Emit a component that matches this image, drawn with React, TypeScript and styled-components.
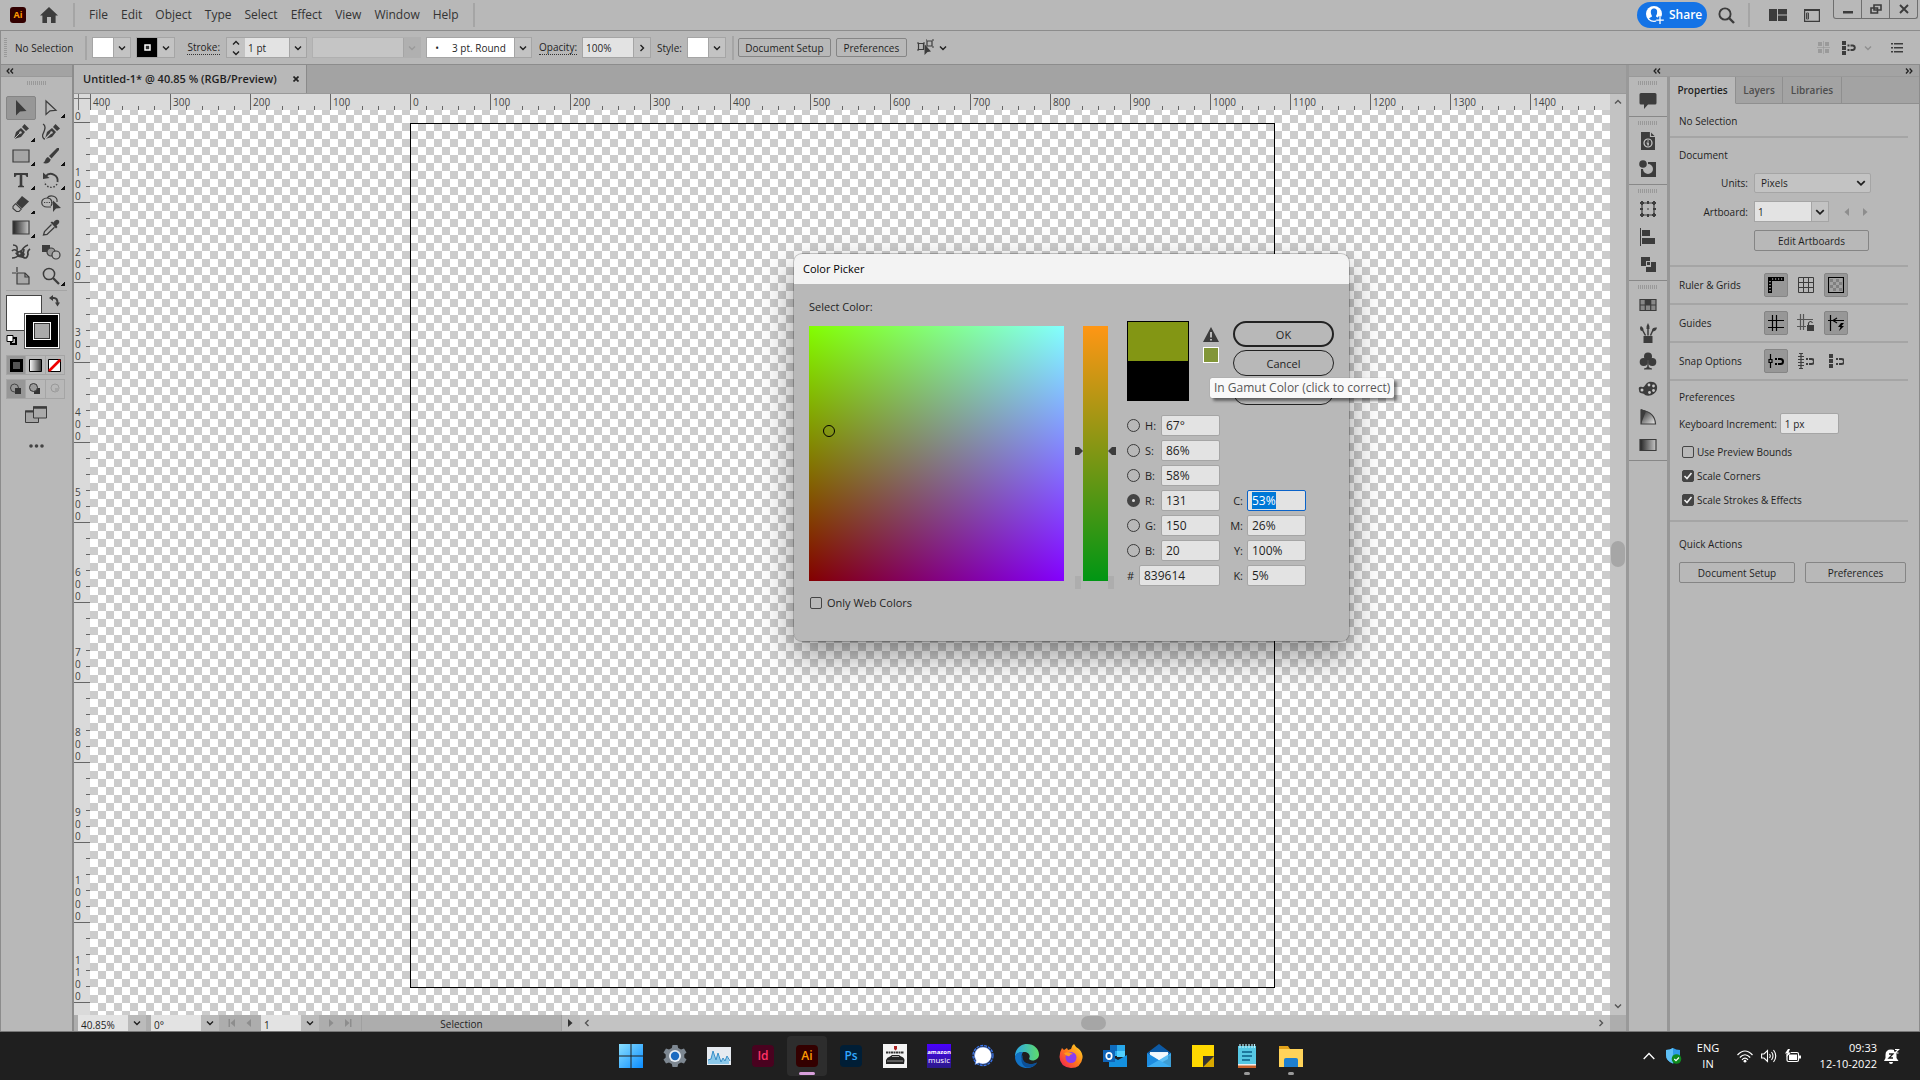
import React, { useEffect, useRef } from 'react';
import styled, { createGlobalStyle, css } from 'styled-components';

const ui = "'Open Sans', 'Noto Sans', sans-serif";
const c = {
  panel: '#b8b8b8',
  dark: '#a3a3a3',
  line: '#8c8c8c',
  soft: '#a5a5a5',
  field: '#e3e3e3',
  button: '#c3c3c3',
  ink: '#1f1f1f',
  icon: '#3c3c3c',
  ruler: '#dadada',
};

const Global = createGlobalStyle`
  *, *::before, *::after { box-sizing: border-box; }
  html, body, #root { height: 100%; }
  body { margin: 0; overflow: hidden; font: 10px/14px ${ui}; color: ${c.ink}; background: ${c.panel}; }
  button, input, select { font: inherit; color: inherit; margin: 0; border-radius: 0; }
  button { padding: 0; background: none; border: 0; white-space: nowrap; }
  svg { display: block; flex: none; }
  a { color: inherit; text-decoration: none; }
  ::selection { background: #0078d7; color: #fff; }
`;

/* ---------- shared pieces ---------- */

const Shell = styled.div`
  height: 100vh;
  display: grid;
  grid-template-rows: 31px 34px minmax(0, 1fr) 48px;
`;
const Row = styled.div<{ $gap?: number }>`
  display: flex;
  align-items: center;
  gap: ${p => p.$gap ?? 0}px;
`;
const Gap = styled.span<{ $w: number }>`
  width: ${p => p.$w}px;
`;
const Spacer = styled.div<{ $h: number }>`
  height: ${p => p.$h}px;
`;
const Divider = styled.span`
  width: 2px;
  height: 24px;
  background: ${c.soft};
`;
const Push = styled.span`
  flex: 1;
`;
const IconButton = styled.button`
  display: grid;
  place-items: center;
`;
const OutlineButton = styled.button<{ $w: number; $h?: number }>`
  width: ${p => p.$w}px;
  height: ${p => p.$h ?? 19}px;
  border: 1px solid #858585;
  border-radius: 2px;
`;
const Combo = styled.div<{ $off?: boolean }>`
  display: flex;
  height: 21px;
  border: 1px solid ${c.soft};
  background: ${c.button};
  ${p => p.$off && css`border-color: #b0b0b0; background: #b0b0b0;`}
`;
const ComboInput = styled.input<{ $w: number; $bg?: string; $center?: boolean }>`
  width: ${p => p.$w}px;
  min-width: 0;
  padding: 0 3px;
  border: 0;
  outline: 0;
  background: ${p => p.$bg ?? c.field};
  text-align: ${p => (p.$center ? 'center' : 'left')};
`;
const ComboDrop = styled.button`
  display: grid;
  place-items: center;
  width: 17px;
  border-left: 1px solid ${c.soft};
`;
const Chip = styled.span<{ $bg: string }>`
  display: grid;
  place-items: center;
  width: 20px;
  background: ${p => p.$bg};
`;

const Chevron = ({ dir = 'down', size = 8, color = c.ink }: { dir?: string; size?: number; color?: string }) => {
  const d: Record<string, string> = {
    down: 'M1 2.5 4 5.5 7 2.5',
    up: 'M1 5.5 4 2.5 7 5.5',
    right: 'M2.5 1 5.5 4 2.5 7',
    left: 'M5.5 1 2.5 4 5.5 7',
  };
  return (
    <svg width={size} height={size} viewBox="0 0 8 8" fill="none" stroke={color} strokeWidth="1.4">
      <path d={d[dir]} />
    </svg>
  );
};
const DoubleChevron = ({ right }: { right?: boolean }) => (
  <svg width="8" height="6" viewBox="0 0 8 6" fill="none" stroke="#222" strokeWidth="1.3">
    <path d={right ? 'M1 .5 3.3 3 1 5.5M4.6 .5 6.9 3 4.6 5.5' : 'M3.4 .5 1.1 3 3.4 5.5M7 .5 4.7 3 7 5.5'} />
  </svg>
);

type IcoProps = { children: React.ReactNode; s?: number; v?: number; stroke?: boolean; color?: string };
const Ico = ({ children, s = 18, v = 18, stroke, color = c.icon }: IcoProps) => (
  <svg width={s} height={s} viewBox={`0 0 ${v} ${v}`} fill={stroke ? 'none' : color} stroke={stroke ? color : 'none'} strokeWidth="1.2">
    {children}
  </svg>
);

/* ---------- menu bar ---------- */

const MenuBar = styled.header`
  display: flex;
  align-items: center;
  padding: 0 2px 0 10px;
  border-bottom: 1px solid ${c.line};
  background: ${c.panel};
`;
const AppBadge = styled.span`
  display: grid;
  place-items: center;
  width: 16px;
  height: 16px;
  margin-right: 14px;
  border-radius: 3px;
  background: #330000;
  color: #ff9a00;
  font-size: 9px;
  font-weight: 700;
`;
const Menus = styled.nav`
  display: flex;
  gap: 13px;
  padding: 0 14px;
  font-size: 12px;
  line-height: 16px;
  color: #333;
`;
const Share = styled.button`
  display: flex;
  align-items: center;
  gap: 4px;
  width: 70px;
  height: 26px;
  padding-left: 8px;
  border-radius: 13px;
  background: #1473e6;
  color: #fff;
  font-size: 12px;
  font-weight: 600;
`;
const HeaderTools = styled.div`
  display: flex;
  align-items: center;
  padding-left: 11px;
  padding-right: 13px;
`;
const WindowButtons = styled.div`
  display: flex;
  align-self: flex-start;
  height: 19px;
  border: 1px solid #6e6e6e;
  border-top: 0;
  border-radius: 0 0 3px 3px;
`;
const WindowButton = styled.button`
  display: grid;
  place-items: center;
  width: 27px;
  & + & { border-left: 1px solid #6e6e6e; width: 28px; }
`;

const Header = () => (
  <MenuBar>
    <AppBadge>Ai</AppBadge>
    <IconButton aria-label="Home">
      <svg width="18" height="16" viewBox="0 0 18 16" fill={c.icon}><path d="M9 0 18 8.6H15.6V16H11V10H7V16H2.4V8.6H0Z" /></svg>
    </IconButton>
    <Gap $w={15} /><Divider />
    <Menus>
      {['File', 'Edit', 'Object', 'Type', 'Select', 'Effect', 'View', 'Window', 'Help'].map(m => <a href="#" key={m}>{m}</a>)}
    </Menus>
    <Divider />
    <Push />
    <Share>
      <svg width="20" height="20" viewBox="0 0 20 20">
        <circle cx="9" cy="9" r="8" fill="#fff" />
        <path d="M9 3.500C12 3.500 12.500 6 12 8.500 11.700 10 11 10.500 11 11.500 12 12.500 13.500 12.500 14 13.500 11 16.500 7 16.500 4 13.500 4.500 12.500 6 12.500 7 11.500 7 10.500 6.300 10 6 8.500 5.500 6 6 3.500 9 3.500Z" fill="#1473e6" />
        <path d="M15 11.500V19M11.200 15.200H18.800" stroke="#1473e6" strokeWidth="4" />
        <path d="M15 11.500V19M11.200 15.200H18.800" stroke="#fff" strokeWidth="1.300" />
      </svg>
      Share
    </Share>
    <HeaderTools>
      <IconButton aria-label="Search">
        <svg width="17" height="17" viewBox="0 0 17 17" fill="none" stroke={c.icon}><circle cx="7" cy="7" r="5.600" strokeWidth="1.900" /><path d="M11 11 16 16" strokeWidth="2.400" /></svg>
      </IconButton>
      <Gap $w={13} /><Divider /><Gap $w={19} />
      <IconButton aria-label="Arrange documents">
        <svg width="18" height="12" viewBox="0 0 18 12" fill={c.icon}><path d="M0 0H8V12H0ZM9 0H18V5.500H9ZM9 6.500H18V12H9Z" /></svg>
      </IconButton>
      <Gap $w={17} />
      <IconButton aria-label="Workspace">
        <svg width="16" height="13" viewBox="0 0 16 13" fill="none" stroke={c.icon}><path d="M.6 .6H15.400V12.400H.6Z" strokeWidth="1.200" /><path d="M0 1H16" strokeWidth="2" /><path d="M2.500 4H4.500V10H2.500ZM2.500 6H4.500M2.500 8H4.500" strokeWidth=".9" /></svg>
      </IconButton>
    </HeaderTools>
    <WindowButtons>
      <WindowButton aria-label="Minimize"><svg width="10" height="10" viewBox="0 0 10 10"><path d="M0 7H10V9.500H0Z" fill={c.icon} /></svg></WindowButton>
      <WindowButton aria-label="Restore"><svg width="12" height="10" viewBox="0 0 12 10" fill="none" stroke={c.icon} strokeWidth="1.600"><path d="M4 1H11V6H4ZM1 4H7.500V9H1Z" /></svg></WindowButton>
      <WindowButton aria-label="Close"><svg width="10" height="10" viewBox="0 0 10 10" stroke={c.icon} strokeWidth="1.900"><path d="M1 1 9 9M9 1 1 9" /></svg></WindowButton>
    </WindowButtons>
  </MenuBar>
);

/* ---------- control bar ---------- */

const ControlBar = styled.div`
  display: flex;
  align-items: center;
  border-bottom: 1px solid ${c.line};
  border-left: 1px solid ${c.line};
  padding: 0 17px 0 3px;
`;
const SideGrip = styled.span`
  width: 3px;
  height: 20px;
  background: repeating-linear-gradient(#999 0 1px, transparent 1px 2px);
`;
const Dotted = styled.label`
  border-bottom: 1px dotted #333;
  line-height: 13px;
`;
const Stepper = styled.span`
  display: grid;
  align-content: center;
  justify-items: center;
  gap: 2px;
  width: 18px;
`;

const SnapIcon = () => (
  <svg width="15" height="14" viewBox="0 0 15 14" fill={c.icon}>
    <path d="M0 0H4V4H0ZM0 5H4V9H0ZM0 10H4V14H0ZM5.500 3.500H7.500V5.500H5.500ZM5.500 8H7.500V10H5.500Z" />
    <path d="M8.500 4.500H11A2.300 2.300 0 0 1 11 9H8.500" fill="none" stroke={c.icon} strokeWidth="2" />
  </svg>
);

const Controls = () => (
  <ControlBar>
    <SideGrip /><Gap $w={8} />No Selection
    <Gap $w={12} /><Divider /><Gap $w={5} />
    <Combo><Chip $bg="#fff" /><ComboDrop aria-label="Fill"><Chevron /></ComboDrop></Combo>
    <Gap $w={5} />
    <Combo>
      <Chip $bg="#000"><svg width="7" height="7" viewBox="0 0 7 7"><path d="M1 1H6V6H1Z" fill="#333" stroke="#fff" strokeWidth="1.500" /></svg></Chip>
      <ComboDrop aria-label="Stroke colour"><Chevron /></ComboDrop>
    </Combo>
    <Gap $w={12} /><Dotted htmlFor="sw">Stroke:</Dotted><Gap $w={6} />
    <Combo>
      <Stepper><Chevron dir="up" /><Chevron /></Stepper>
      <ComboInput id="sw" $w={44} defaultValue="1 pt" />
      <ComboDrop aria-label="Stroke weight"><Chevron /></ComboDrop>
    </Combo>
    <Gap $w={5} />
    <Combo $off><ComboInput aria-label="Width profile" disabled $w={90} $bg="#c5c5c5" /><ComboDrop disabled aria-label="Profiles"><Chevron color="#9a9a9a" /></ComboDrop></Combo>
    <Gap $w={5} />
    <Combo><ComboInput aria-label="Brush" $w={87} $bg="#fff" $center defaultValue={'•\u00a0\u00a0\u00a0\u00a0 3 pt. Round'} /><ComboDrop aria-label="Brushes"><Chevron /></ComboDrop></Combo>
    <Gap $w={7} /><Dotted htmlFor="op">Opacity:</Dotted><Gap $w={5} />
    <Combo><ComboInput id="op" $w={50} defaultValue="100%" /><ComboDrop aria-label="Opacity slider"><Chevron dir="right" /></ComboDrop></Combo>
    <Gap $w={6} />Style:<Gap $w={5} />
    <Combo><Chip $bg="#fff" /><ComboDrop aria-label="Style"><Chevron /></ComboDrop></Combo>
    <Gap $w={6} /><Divider /><Gap $w={4} />
    <OutlineButton $w={93}>Document Setup</OutlineButton>
    <Gap $w={5} />
    <OutlineButton $w={71}>Preferences</OutlineButton>
    <Gap $w={10} />
    <IconButton aria-label="Select similar">
      <svg width="17" height="17" viewBox="0 0 17 17" fill="none" stroke={c.icon}><path d="M1.500 4.500H6.500V10.500H1.500ZM10 2H15V7H10Z" strokeWidth="1.200" /><path d="M0 4H2M0 11H2M6 4H8M9 1H10M15 1H17M15 8H17" /><path d="M7.500 5V16L10.500 13 14 12.500Z" fill={c.icon} stroke="none" /></svg>
    </IconButton>
    <Gap $w={5} /><Chevron />
    <Push />
    <svg width="14" height="14" viewBox="0 0 14 14" fill="#9a9a9a"><path d="M1 1H5V5H1ZM8 1H12V5H8ZM1 8H5V12H1ZM8 8H12V12H8Z" /><path d="M6.500 0V13M0 6.500H13" stroke="#9a9a9a" strokeWidth=".7" /></svg>
    <Gap $w={11} /><SnapIcon />
    <Gap $w={7} /><Chevron color="#8f8f8f" /><Gap $w={19} />
    <svg width="12" height="10" viewBox="0 0 12 10" fill={c.icon}><path d="M0 0H2V1.500H0ZM3 0H12V1.500H3ZM0 4H2V5.500H0ZM3 4H12V5.500H3ZM0 8H2V9.500H0ZM3 8H12V9.500H3Z" /></svg>
  </ControlBar>
);

/* ---------- tool box ---------- */

const Workspace = styled.main`
  display: flex;
  min-height: 0;
  border-bottom: 1px solid #777;
`;
const ToolBox = styled.aside`
  width: 74px;
  flex: none;
  border: solid ${c.line};
  border-width: 0 2px 0 1px;
`;
const CollapseStrip = styled.div`
  display: flex;
  align-items: center;
  height: 12px;
  padding: 0 5px;
  background: ${c.dark};
  border-bottom: 1px solid #999;
`;
const Grip = styled.div`
  width: 20px;
  height: 4px;
  margin: 4px auto 2px;
  background: repeating-linear-gradient(90deg, #999 0 1px, transparent 1px 2px);
`;
const ToolGrid = styled.div`
  display: grid;
  grid-template-columns: repeat(2, 30px);
  grid-auto-rows: 24px;
  padding: 9px 5px 0;
`;
const Tool = styled.button<{ $on?: boolean; $more?: boolean }>`
  display: grid;
  place-items: center;
  border-radius: 2px;
  ${p => p.$on && css`background: #979797; border: 1px solid #858585;`}
  ${p => p.$more && css`background: linear-gradient(135deg, transparent 50%, #111 50%) right 1px bottom 2px / 4px 4px no-repeat;`}
`;
const Colors = styled.div`
  display: grid;
  grid-template-columns: 18px 18px 18px;
  grid-template-rows: 18px 18px 18px;
  margin: 2px 5px 6px;
  padding-top: 4px;
  border-top: 1px solid ${c.soft};
`;
const FillBox = styled.button`
  grid-area: 1 / 1 / 3 / 3;
  background: #fff;
  border: 1px solid #444;
`;
const StrokeBox = styled.button`
  grid-area: 2 / 2 / 4 / 4;
  display: grid;
  place-items: center;
  background: #000;
  border: 1px solid #555;
  box-shadow: inset 0 0 0 1px #fff;
  &::after { content: ''; width: 18px; height: 18px; background: #aaa; border: 1px solid #fff; outline: 1px solid #333; outline-offset: -2px; }
`;
const Corner = styled.span<{ $a: string; $start?: boolean }>`
  grid-area: ${p => p.$a};
  place-self: ${p => (p.$start ? 'start end' : 'center start')};
`;
const Modes = styled.div`
  display: flex;
  width: 59px;
  height: 20px;
  margin: 0 0 4px 5px;
  border: 1px solid ${c.soft};
`;
const Mode = styled.button<{ $on?: boolean }>`
  flex: 1;
  display: grid;
  place-items: center;
  background: ${p => (p.$on ? '#979797' : 'none')};
  & + & { border-left: 1px solid ${c.soft}; }
`;
const ToolFoot = styled.div`
  display: grid;
  justify-items: center;
  gap: 21px;
  padding-top: 3px;
`;

const k = c.icon;
const pen = <path d="M2 16 4 9 9 5 13 9 9 14ZM10 4 12.500 1 17 5.500 14 8Z" />;
const tools: { name: string; more?: boolean; icon: React.ReactNode }[] = [
  { name: 'Selection', icon: <Ico><path d="M4 1V16.500L8 12.500 14.500 12Z" /></Ico> },
  { name: 'Direct selection', more: true, icon: <Ico stroke><path d="M4 2V15.500L8 11.800 14 11.300Z" /></Ico> },
  { name: 'Pen', more: true, icon: <Ico>{pen}<path d="M2 16 8 10" stroke="#bbb" strokeWidth="1" /><circle cx="8.500" cy="9.500" r="1.200" fill="#bbb" /></Ico> },
  { name: 'Curvature', icon: <Ico><g transform="translate(1)">{pen}<path d="M2 16 8 10" stroke="#bbb" /><circle cx="8.500" cy="9.500" r="1.200" fill="#bbb" /></g><path d="M1 1C5 3 2 9 1 11S1 16 3 16" fill="none" stroke={k} strokeWidth="1.300" /></Ico> },
  { name: 'Rectangle', more: true, icon: <Ico><path d="M1 3H17V15H1Z" fill="#a5a5a5" stroke={k} strokeWidth="1.200" /></Ico> },
  { name: 'Paintbrush', more: true, icon: <Ico><path d="M17 1 15 1 7 9 9.500 11.500 17 3ZM6 10 8.700 12.600C8 16.500 4 17 1 16 3.500 15 3 11 6 10Z" /></Ico> },
  { name: 'Type', more: true, icon: <Ico><path d="M2 2H16V6H14.500Q14.500 4 12.500 4H10.300V14Q10.300 15 12 15V16.200H6V15Q7.700 15 7.700 14V4H5.500Q3.500 4 3.500 6H2Z" /></Ico> },
  { name: 'Rotate', more: true, icon: <Ico stroke><path d="M3.500 5.500A6.800 6.800 0 0 1 15.500 11" strokeWidth="1.900" /><path d="M15 13A6.800 6.800 0 0 1 2.500 11" strokeWidth="1.400" strokeDasharray="1.500 1.700" /><path d="M1 1.500V8L7.500 7Z" fill={k} stroke="none" /></Ico> },
  { name: 'Eraser', more: true, icon: <Ico><path d="M10 1 17 6.500 10 13.500 4 8Z" /><path d="M3.500 8.700 9.300 14 7 16.500H4.500L1 13.500V11.500Z" fill="none" stroke={k} strokeWidth="1.100" /></Ico> },
  { name: 'Shape builder', icon: <Ico s={20} v={20}><path d="M6 4C9 0 17 2 16 8M6 4C-1 4-1 13 6 13H10M6 4C11 4 12 9 10 12" fill="none" stroke={k} strokeWidth="1.200" /><path d="M3 8.500H12" stroke={k} strokeDasharray="1.200 1.200" /><path d="M12 6.500V18L15 14.500 20 14Z" /></Ico> },
  { name: 'Gradient', more: true, icon: <Ico><defs><linearGradient id="gr"><stop stopColor="#222" /><stop offset="1" stopColor="#c8c8c8" /></linearGradient></defs><path d="M1 2H17V15H1Z" fill="url(#gr)" stroke={k} strokeWidth="1.200" /></Ico> },
  { name: 'Eyedropper', icon: <Ico><path d="M10 5 8.500 3.500 10 2.500 11.500 3.500C13 1 15 0 17 1.500 18 3.500 16.500 5 14.500 6.500L15.500 8 14 9.500Z" /><path d="M9.500 5.500 2.500 12.500 1.500 16 5 15.500 12.500 8.300" fill="none" stroke={k} strokeWidth="1.300" /></Ico> },
  { name: 'Puppet warp', icon: <Ico s={20} v={20}><path d="M1 9Q3 6.500 6 9L12 15Q16 18 17 12 16 9 19 7" fill="none" stroke={k} strokeWidth="1.700" /><path d="M2 3Q7 3 6 8M1 16Q7 16 10 10 12 5 17 3M9 14Q13 12 13 7" fill="none" stroke={k} strokeWidth="1.500" /><path d="M4 11 10 8 14 12 12 16 7 15Z" /><circle cx="8.500" cy="11.500" r="1" fill="#b8b8b8" /></Ico> },
  { name: 'Blend', icon: <Ico s={19} v={19}><path d="M0 2H8V9H0Z" /><circle cx="9" cy="9" r="4" fill="#999" stroke={k} /><circle cx="14" cy="12" r="4" fill="#b8b8b8" stroke={k} strokeWidth="1.200" /></Ico> },
  { name: 'Artboard', icon: <Ico stroke><path d="M5 6H13L17 10V17H5Z" fill="#a8a8a8" /><path d="M0 6H4M5 0V5M13 6V10H17" /></Ico> },
  { name: 'Zoom', more: true, icon: <Ico stroke><circle cx="7" cy="7" r="5.600" strokeWidth="1.500" /><path d="M11 11 17 17" strokeWidth="2.300" /></Ico> },
];

const Tools = () => (
  <ToolBox>
    <CollapseStrip><DoubleChevron /></CollapseStrip>
    <Grip />
    <ToolGrid>
      {tools.map((t, i) => <Tool key={t.name} aria-label={t.name} $on={i === 0} $more={t.more}>{t.icon}</Tool>)}
    </ToolGrid>
    <Colors>
      <FillBox aria-label="Fill" />
      <StrokeBox aria-label="Stroke" />
      <Corner $a="1 / 3" $start><svg width="11" height="12" viewBox="0 0 11 12"><path d="M3 3H5Q8.500 3 8.500 8" fill="none" stroke={k} strokeWidth="2" /><path d="M0 3 4 0V6ZM6 7.500H11L8.500 11.500Z" fill={k} /></svg></Corner>
      <Corner $a="3 / 1"><svg width="12" height="12" viewBox="0 0 12 12"><path d="M5 4H10V10H5Z" fill="none" stroke="#000" strokeWidth="2" /><path d="M1 1.500H7V7.500H1Z" fill="#fff" stroke="#000" /></svg></Corner>
    </Colors>
    <Modes>
      <Mode $on aria-label="Color"><svg width="13" height="13" viewBox="0 0 13 13"><path d="M0 0H13V13H0Z" /><path d="M3 3H10V10H3Z" fill="#555" /></svg></Mode>
      <Mode aria-label="Gradient"><svg width="13" height="13" viewBox="0 0 13 13"><defs><linearGradient id="g2"><stop stopColor="#fff" /><stop offset="1" stopColor="#333" /></linearGradient></defs><path d="M.5 .5H12.500V12.500H.5Z" fill="url(#g2)" stroke="#000" /></svg></Mode>
      <Mode aria-label="None"><svg width="13" height="13" viewBox="0 0 13 13"><path d="M.5 .5H12.500V12.500H.5Z" fill="#fff" stroke="#000" /><path d="M1 12 12 1" stroke="#e00" strokeWidth="2.600" /></svg></Mode>
    </Modes>
    <Modes>
      <Mode $on aria-label="Draw normal"><svg width="12" height="12" viewBox="0 0 12 12"><circle cx="4.500" cy="5" r="4" fill="none" stroke="#444" /><path d="M5 5H11V11H5Z" fill="#333" /></svg></Mode>
      <Mode aria-label="Draw behind"><svg width="12" height="12" viewBox="0 0 12 12"><path d="M5 5H11V11H5Z" fill="#333" /><circle cx="4.500" cy="4.500" r="4" fill="#999" stroke="#333" /></svg></Mode>
      <Mode aria-label="Draw inside"><svg width="12" height="12" viewBox="0 0 12 12"><circle cx="6" cy="5" r="4" fill="none" stroke="#999" /><path d="M6 5H10Q10 9 6 9Z" fill="#a5a5a5" /></svg></Mode>
    </Modes>
    <ToolFoot>
      <svg width="23" height="17" viewBox="0 0 23 17" stroke={k}><path d="M.5 5H13.500V16.500H.5Z" fill="#a5a5a5" /><path d="M0 5.500H13" strokeWidth="2" /><path d="M8.500 1H21.500V12H8.500Z" fill="#aaa" /><path d="M8 1.500H22" strokeWidth="2.500" /></svg>
      <svg width="15" height="4" viewBox="0 0 15 4" fill="#444"><circle cx="2" cy="2" r="1.800" /><circle cx="7.500" cy="2" r="1.800" /><circle cx="13" cy="2" r="1.800" /></svg>
    </ToolFoot>
  </ToolBox>
);

/* ---------- document ---------- */

const Doc = styled.section`
  flex: 1;
  min-width: 0;
  display: grid;
  grid-template-rows: 29px minmax(0, 1fr) 16px;
`;
const TabBar = styled.div`
  display: flex;
  background: ${c.dark};
  border-bottom: 1px solid #999;
`;
const DocTab = styled.button`
  display: flex;
  align-items: center;
  gap: 16px;
  padding: 0 7px 0 9px;
  border-right: 1px solid #8a8a8a;
  background: ${c.panel};
  font-size: 11px;
  font-weight: 600;
`;
const Board = styled.div`
  display: grid;
  grid-template-columns: 16px minmax(0, 1fr) 16px;
  grid-template-rows: 16px minmax(0, 1fr);
`;
const RulerCorner = styled.div`
  background:
    linear-gradient(#777, #777) 4px 0 / 1px 100% no-repeat,
    linear-gradient(#777, #777) 0 4px / 100% 1px no-repeat,
    ${c.ruler};
`;
const RulerX = styled.div`
  display: flex;
  overflow: hidden;
  color: #444;
  background: ${c.ruler};
`;
const MarkX = styled.span`
  flex: none;
  width: 80px;
  padding: 1px 0 0 2px;
  border-left: 1px solid #666;
  background: repeating-linear-gradient(90deg, transparent 0 15px, #666 15px 16px) left bottom / 100% 4px no-repeat;
`;
const RulerY = styled.div`
  display: flex;
  flex-direction: column;
  overflow: hidden;
  color: #444;
  background: ${c.ruler};
  line-height: 12px;
`;
const MarkY = styled.span<{ $first?: boolean }>`
  flex: none;
  display: flex;
  flex-direction: column;
  justify-content: flex-end;
  height: ${p => (p.$first ? 13 : 80)}px;
  padding-left: 1px;
  border-bottom: 1px solid #666;
  background: ${p => (p.$first ? 'none' : 'repeating-linear-gradient(transparent 0 15px, #666 15px 16px) right top / 4px 100% no-repeat')};
`;
const Canvas = styled.div`
  position: relative;
  overflow: hidden;
  background: conic-gradient(#ccc 25%, #fff 0 50%, #ccc 0 75%, #fff 0) 0 13px / 16px 16px;
`;
const Artboard = styled.div`
  position: absolute;
  left: 320px;
  top: 13px;
  width: 865px;
  height: 865px;
  border: 1px solid #000;
`;
const ScrollY = styled.div`
  grid-row: 1 / 3;
  grid-column: 3;
  display: flex;
  flex-direction: column;
  align-items: center;
  padding: 4px 0 5px;
  background: #c3c3c3;
`;
const Thumb = styled.button<{ $w: number; $h: number }>`
  width: ${p => p.$w}px;
  height: ${p => p.$h}px;
  border-radius: 7px;
  background: #a6a6a6;
`;
const Status = styled.footer`
  display: flex;
  align-items: stretch;
  padding-left: 4px;
  background: #adadad;
`;
const StatusField = styled.input<{ $w: number }>`
  width: ${p => p.$w}px;
  padding: 3px 3px 0;
  border: 0;
  background: ${c.field};
`;
const StatusDrop = styled.button<{ $m: number }>`
  display: grid;
  place-items: center;
  width: 18px;
  margin-right: ${p => p.$m}px;
  background: #bbb;
`;
const Nav = styled.div`
  display: flex;
  align-items: center;
  justify-content: space-evenly;
  width: 42px;
`;
const StatusText = styled.span`
  flex: none;
  width: 201px;
  border: solid #a0a0a0;
  border-width: 0 1px;
  text-align: center;
  line-height: 18px;
`;
const ScrollX = styled.div`
  flex: 1;
  display: flex;
  align-items: center;
  padding: 0 5px 0 3px;
  background: #c3c3c3;
`;
const Grow = styled.span<{ $n: number }>`
  flex: ${p => p.$n};
`;
const Tri = ({ flip, bar, color = '#8d8d8d' }: { flip?: boolean; bar?: boolean; color?: string }) => (
  <svg width="8" height="8" viewBox="0 0 8 8" fill={color}>
    <g transform={flip ? 'matrix(-1 0 0 1 8 0)' : undefined}><path d="M1 0 5.500 4 1 8Z" />{bar && <path d="M6 0H7.500V8H6Z" />}</g>
  </svg>
);

const xs = Array.from({ length: 19 }, (_, i) => Math.abs(i - 4) * 100);
const ys = Array.from({ length: 12 }, (_, i) => String(i * 100));

const Document = () => (
  <Doc>
    <TabBar>
      <DocTab>Untitled-1* @ 40.85 % (RGB/Preview)
        <svg width="6" height="6" viewBox="0 0 6 6" stroke="#222" strokeWidth="1.700"><path d="M.5 .5 5.500 5.500M5.500 .5 .5 5.500" /></svg>
      </DocTab>
    </TabBar>
    <Board>
      <RulerCorner />
      <RulerX>{xs.map((x, i) => <MarkX key={i}>{x}</MarkX>)}</RulerX>
      <ScrollY>
        <Chevron dir="up" color="#555" /><Grow $n={435} /><Thumb $w={14} $h={26} aria-label="Scroll vertically" /><Grow $n={436} /><Chevron color="#555" />
      </ScrollY>
      <RulerY>
        {ys.map((y, i) => <MarkY key={y} $first={i === 0}>{y.split('').map((d, j) => <span key={j}>{d}</span>)}</MarkY>)}
      </RulerY>
      <Canvas><Artboard /></Canvas>
    </Board>
    <Status>
      <StatusField aria-label="Zoom" $w={50} defaultValue="40.85%" /><StatusDrop $m={5} aria-label="Zoom levels"><Chevron /></StatusDrop>
      <StatusField aria-label="Rotation" $w={50} defaultValue="0°" /><StatusDrop $m={0} aria-label="Rotations"><Chevron /></StatusDrop>
      <Nav><Tri flip bar /><Tri flip /></Nav>
      <StatusField aria-label="Artboard number" $w={40} defaultValue="1" /><StatusDrop $m={0} aria-label="Artboards"><Chevron /></StatusDrop>
      <Nav><Tri /><Tri bar /></Nav>
      <StatusText>Selection</StatusText>
      <StatusDrop $m={0} aria-label="Status menu"><Tri color="#333" /></StatusDrop>
      <ScrollX>
        <Chevron dir="left" color="#555" /><Grow $n={492} /><Thumb $w={25} $h={14} aria-label="Scroll horizontally" /><Grow $n={494} /><Chevron dir="right" color="#555" />
      </ScrollX>
      <Gap $w={16} />
    </Status>
  </Doc>
);

/* ---------- dock and properties ---------- */

const Right = styled.aside`
  flex: none;
  width: 294px;
  display: grid;
  grid-template-columns: 41px 1fr;
  grid-template-rows: 12px 1fr;
  border-left: 3px solid #999;
  border-right: 1px solid ${c.line};
`;
const Strip = styled.div`
  display: flex;
  align-items: center;
  justify-content: space-between;
  grid-column: 1 / 3;
  padding: 0 6px 0 24px;
  background: ${c.dark};
  border-bottom: 1px solid #999;
`;
const Dock = styled.div`
  border-right: 3px solid #979797;
`;
const DockGroup = styled.div`
  display: flex;
  flex-direction: column;
  padding-bottom: 1px;
  border-bottom: 1px solid #888;
`;
const DockIcon = styled.button`
  height: 28px;
  display: grid;
  place-items: center;
`;
const Props = styled.div`
  display: flex;
  flex-direction: column;
`;
const PropTabs = styled.div`
  display: flex;
  height: 27px;
  background: ${c.dark};
  font-weight: 600;
  color: #4d4d4d;
`;
const PropTab = styled.button<{ $on?: boolean; $w: number }>`
  width: ${p => p.$w}px;
  border: solid #8f8f8f;
  border-width: 0 1px 1px 0;
  ${p => p.$on && css`background: ${c.panel}; border-bottom-color: ${c.panel}; color: ${c.ink};`}
`;
const TabFill = styled.span`
  flex: 1;
  border-bottom: 1px solid #8f8f8f;
`;
const Section = styled.section<{ $h: number }>`
  height: ${p => p.$h}px;
  margin-right: 11px;
  padding-left: 9px;
  border-bottom: 2px solid ${c.soft};
`;
const Title = styled.h2<{ $top: number; $bottom: number }>`
  margin: 0;
  padding: ${p => p.$top}px 0 ${p => p.$bottom}px;
  font: inherit;
`;
const FormRow = styled.div`
  display: grid;
  grid-template-columns: 69px auto 1fr;
  column-gap: 6px;
  align-items: center;
  height: 29px;
  & > :first-child { text-align: right; }
`;
const SelectBox = styled.div`
  display: grid;
  align-items: center;
  width: 117px;
  & > * { grid-area: 1 / 1; }
  & > svg { justify-self: end; margin-right: 5px; pointer-events: none; }
`;
const Select = styled.select`
  appearance: none;
  height: 20px;
  padding: 0 6px;
  border: 1px solid ${c.soft};
  border-radius: 2px;
  background: ${c.button};
`;
const Steps = styled.div`
  display: flex;
  gap: 12px;
  padding-left: 7px;
`;
const ToggleRow = styled.section`
  display: grid;
  grid-template-columns: 79px repeat(3, 24px);
  column-gap: 6px;
  align-items: center;
  height: 38px;
  margin-right: 11px;
  padding-left: 9px;
  border-bottom: 2px solid ${c.soft};
`;
const Toggle = styled.button<{ $on?: boolean }>`
  display: grid;
  place-items: center;
  width: 24px;
  height: 24px;
  border-radius: 2px;
  ${p => p.$on && css`background: #979797; border: 1px solid #858585;`}
`;
const TextField = styled.input<{ $w: number }>`
  width: ${p => p.$w}px;
  height: 21px;
  padding: 0 4px;
  border: 1px solid ${c.soft};
  border-radius: 2px;
  background: ${c.field};
`;
const Check = styled.label`
  display: flex;
  align-items: center;
  gap: 3px;
  height: 24px;
  padding-left: 3px;
`;
const tick = "url(\"data:image/svg+xml,%3Csvg xmlns='http://www.w3.org/2000/svg' viewBox='0 0 10 10'%3E%3Cpath d='M1.500 5 4 7.500 8.500 2' fill='none' stroke='%23eee' stroke-width='1.600'/%3E%3C/svg%3E\")";
const Box = styled.input`
  appearance: none;
  width: 12px;
  height: 12px;
  border: 1px solid #444;
  border-radius: 2px;
  &:checked { background: #444 ${tick} center / 10px 10px no-repeat; }
`;
const QuickActions = styled.section`
  padding-left: 9px;
`;

const dock: { name: string; icon: React.ReactNode }[][] = [
  [{ name: 'Comments', icon: <Ico><path d="M2 1H16Q17.500 1 17.500 2.500V11Q17.500 12.500 16 12.500H9L5 17V12.500H2Q.5 12.500 .5 11V2.500Q.5 1 2 1Z" /></Ico> }],
  [
    { name: 'Document info', icon: <Ico><path d="M2 0H11.500L16 4.500V18H2Z" /><path d="M11.500 0V4.500H16" fill="none" stroke="#b8b8b8" /><circle cx="9" cy="11" r="4" fill="none" stroke="#ccc" strokeWidth="1.200" /><path d="M8.300 8.500H9.800V9.500H8.300ZM7.500 10.500H9.800V13.500H8.300V11.500H7.500Z" fill="#ccc" /></Ico> },
    { name: 'CC Libraries', icon: <Ico><circle cx="4" cy="4" r="3.800" /><path d="M9 2H17V17H2V9H4A5 5 0 1 0 9 4Z" /></Ico> },
  ],
  [
    { name: 'Transform', icon: <Ico stroke><path d="M3 3H15V15H3Z" /><path d="M1 3H5M3 1V5M13 3H17M15 1V5M1 15H5M3 13V17M13 15H17M15 13V17M9 1V4M9 14V17M1 9H4M14 9H17" strokeWidth="2" /><path d="M8 9H10" /></Ico> },
    { name: 'Align', icon: <Ico><path d="M1 0H2V18H1ZM3 2H11V8H3ZM3 10H16V16H3Z" /></Ico> },
    { name: 'Pathfinder', icon: <Ico><path d="M2 1H11V5H7V10H2Z" /><path d="M8 6H11V9H8Z" /><path d="M12 6H17V16H7V11H12Z" /></Ico> },
  ],
  [
    { name: 'Swatches', icon: <Ico><path d="M1 3.500H17V14.500H1Z" fill="#888" stroke={k} strokeWidth="1.200" /><path d="M6 3H12V9H6Z" /><path d="M1 9H17M6.300 3V15M11.700 3V15" stroke={k} /></Ico> },
    { name: 'Brushes', icon: <Ico s={20} v={20}><path d="M5.500 13H14.500V20H5.500Z" /><path d="M7.500 12.500 4.500 7M10 12.500V6M12.500 12.500 15 7" stroke={k} strokeWidth="1.500" /><path d="M8.500 6Q8 3 10 0 12 3 11.500 6ZM3 8Q1 5 3 3 6 5 5.500 7ZM14 7.500Q14 4 19 4.500 18.500 8 15 8.500Z" /></Ico> },
    { name: 'Symbols', icon: <Ico><circle cx="9" cy="4.500" r="4" /><circle cx="4.700" cy="10" r="4" /><circle cx="13.300" cy="10" r="4" /><path d="M8.300 7H9.700V14.500Q10 16 13 16.500V17.500H5V16.500Q8 16 8.300 14.500Z" /></Ico> },
    { name: 'Color', icon: <Ico s={20} v={20}><path d="M11 3C17 2 20 6 19 10 18 15 12 18 7 16 6 13 1 16 1 11 0 8 2 7 4 8 7 9 7 4 11 3Z" /><g fill="#c8c8c8"><circle cx="11" cy="6" r="1.400" /><circle cx="15.500" cy="7" r="1.400" /><circle cx="15.500" cy="11.500" r="1.400" /><circle cx="11.500" cy="13.500" r="1.400" /><circle cx="4" cy="11" r="1.500" /></g></Ico> },
    { name: 'Color guide', icon: <Ico><defs><linearGradient id="gg" x2="1" y2="1"><stop stopColor="#222" /><stop offset="1" stopColor="#eee" /></linearGradient></defs><path d="M2 16V2Q16 4 16.500 16Z" fill="url(#gg)" stroke={k} strokeWidth="1.200" /><path d="M2 16V1L7 3Z" /></Ico> },
    { name: 'Gradient', icon: <Ico><path d="M1 3.500H17V14.500H1Z" fill="url(#gr)" stroke={k} strokeWidth="1.200" /></Ico> },
  ],
];

const Magnet = ({ x = 7, color = k }: { x?: number; color?: string }) => (
  <g transform={`translate(${x} 5)`}><path d="M0 0H2V2H0ZM0 5H2V7H0Z" fill={color} /><path d="M3 1H5.500A2.400 2.400 0 0 1 5.500 6H3" fill="none" stroke={color} strokeWidth="2" /></g>
);

const Properties = () => (
  <Right>
    <Strip><DoubleChevron /><DoubleChevron right /></Strip>
    <Dock>
      {dock.map((g, i) => (
        <DockGroup key={i}>
          <Grip />
          {g.map(d => <DockIcon key={d.name} aria-label={d.name}>{d.icon}</DockIcon>)}
        </DockGroup>
      ))}
    </Dock>
    <Props>
      <PropTabs>
        <PropTab $on $w={66}>Properties</PropTab><PropTab $w={47}>Layers</PropTab><PropTab $w={59}>Libraries</PropTab><TabFill />
      </PropTabs>
      <Section $h={34}><Title $top={10} $bottom={8}>No Selection</Title></Section>
      <Section $h={129}>
        <Title $top={10} $bottom={6}>Document</Title>
        <FormRow>
          <label htmlFor="units">Units:</label>
          <SelectBox><Select id="units"><option>Pixels</option></Select><Chevron size={10} /></SelectBox>
        </FormRow>
        <FormRow>
          <label htmlFor="ab">Artboard:</label>
          <Combo><ComboInput id="ab" $w={56} defaultValue="1" /><ComboDrop aria-label="Artboards"><Chevron size={10} /></ComboDrop></Combo>
          <Steps><Tri flip /><Tri /></Steps>
        </FormRow>
        <FormRow><span /><OutlineButton $w={115} $h={21}>Edit Artboards</OutlineButton></FormRow>
      </Section>
      <ToggleRow>
        <span>Ruler &amp; Grids</span>
        <Toggle $on aria-label="Show rulers"><Ico s={16} v={16}><path d="M0 0H16V4H4V16H0Z" fill="#000" /><path d="M4 2H15M2 4V15" stroke="#ddd" strokeDasharray="1.200 1.800" /></Ico></Toggle>
        <Toggle aria-label="Show grid"><Ico s={16} v={16} stroke><path d="M.5 .5H15.500V15.500H.5ZM5.500 0V16M10.500 0V16M0 5.500H16M0 10.500H16" strokeWidth="1" /></Ico></Toggle>
        <Toggle $on aria-label="Show transparency grid"><Ico s={16} v={16}><path d="M.5 .5H15.500V15.500H.5Z" fill="#a3a3a3" stroke="#000" /><path d="M2 2H5V5H2ZM8 2H11V5H8ZM5 5H8V8H5ZM11 5H14V8H11ZM2 8H5V11H2ZM8 8H11V11H8ZM5 11H8V14H5ZM11 11H14V14H11Z" fill="#808080" /></Ico></Toggle>
      </ToggleRow>
      <ToggleRow>
        <span>Guides</span>
        <Toggle $on aria-label="Show guides"><Ico s={16} v={16}><path d="M4.500 0V16M8.500 0V16M0 5.500H16M0 12.500H16" stroke="#000" /></Ico></Toggle>
        <Toggle aria-label="Lock guides"><Ico s={18} v={18}><path d="M3.500 0V16M6.500 0V16M0 5.500H16M0 12.500H9" stroke="#555" /><path d="M10 11H17V17H10Z" /><path d="M11.500 11V9Q13.500 6 15.500 9" fill="none" stroke={k} /></Ico></Toggle>
        <Toggle $on aria-label="Smart guides"><Ico s={16} v={16}><path d="M2.500 0V16M0 5.500H16M9 3 5 5.500 9 8" stroke="#000" fill="none" /><path d="M13 8 10 12H12.500L11 16 16 11H13.500L16 8Z" fill="#000" /></Ico></Toggle>
      </ToggleRow>
      <ToggleRow>
        <span>Snap Options</span>
        <Toggle $on aria-label="Snap to point"><Ico s={16} v={16}><path d="M2.500 1V6M2.500 10V15M1 6.500H4V9.500H1Z" stroke="#000" fill="none" /><Magnet x={7} color="#000" /></Ico></Toggle>
        <Toggle aria-label="Snap to grid"><Ico s={16} v={16}><path d="M1 .5H5M1 15.500H5M3 0V16M0 3.500H6M0 6.500H6M0 9.500H6M0 12.500H6" stroke={k} /><Magnet x={8} /></Ico></Toggle>
        <Toggle aria-label="Snap to pixel"><Ico s={16} v={16}><path d="M1 1H5V5H1ZM1 6H5V10H1ZM1 11H5V15H1Z" /><Magnet x={8} /></Ico></Toggle>
      </ToggleRow>
      <Section $h={141}>
        <Title $top={9} $bottom={9}>Preferences</Title>
        <Row $gap={3}><label htmlFor="ki">Keyboard Increment:</label><TextField id="ki" $w={59} defaultValue="1 px" /></Row>
        <Spacer $h={6} />
        <Check><Box type="checkbox" />Use Preview Bounds</Check>
        <Check><Box type="checkbox" defaultChecked />Scale Corners</Check>
        <Check><Box type="checkbox" defaultChecked />Scale Strokes &amp; Effects</Check>
      </Section>
      <QuickActions>
        <Title $top={15} $bottom={11}>Quick Actions</Title>
        <Row $gap={10}><OutlineButton $w={116} $h={21}>Document Setup</OutlineButton><OutlineButton $w={101} $h={21}>Preferences</OutlineButton></Row>
      </QuickActions>
    </Props>
  </Right>
);

/* ---------- colour picker ---------- */

const Dialog = styled.div`
  position: absolute;
  left: 794px;
  top: 254px;
  width: 555px;
  height: 387px;
  border-radius: 8px;
  background: ${c.panel};
  box-shadow: 0 0 0 1px rgba(0, 0, 0, .2), 0 14px 34px rgba(0, 0, 0, .42);
  font-size: 11px;
  line-height: 16px;
`;
const DialogTitle = styled.h1`
  height: 30px;
  margin: 0;
  padding: 7px 9px;
  border-radius: 8px 8px 0 0;
  background: #f3f3f3;
  color: #000;
  font: inherit;
`;
const DialogBody = styled.div`
  display: flex;
  padding-left: 15px;
`;
const FieldColumn = styled.div`
  width: 255px;
`;
const FieldLabel = styled.div`
  height: 42px;
  padding-top: 15px;
`;
const ColorField = styled.div`
  position: relative;
  height: 255px;
  background: linear-gradient(#0f0, #000), linear-gradient(90deg, #000, #00f), #830000;
  background-blend-mode: screen;
  &::after {
    content: '';
    position: absolute;
    left: 14px;
    top: 99px;
    width: 12px;
    height: 12px;
    border: 1px solid #000;
    border-radius: 50%;
  }
`;
const HueColumn = styled.div`
  display: flex;
  padding: 42px 11px 0 11px;
`;
const HueStrip = styled.div`
  width: 25px;
  height: 255px;
  background: linear-gradient(#ff9614, #009614);
`;
const Handle = styled.div<{ $right?: boolean }>`
  display: flex;
  flex-direction: column;
  justify-content: space-between;
  align-items: ${p => (p.$right ? 'flex-start' : 'flex-end')};
  width: 8px;
  height: 263px;
  padding-top: 121px;
  &::after { content: ''; width: 6px; height: 13px; background: #adadad; align-self: flex-start; }
`;
const Values = styled.div`
  padding-top: 37px;
`;
const Head = styled.div`
  display: grid;
  grid-template-columns: 62px 16px 101px;
  column-gap: 14px;
  align-items: start;
  margin-bottom: 10px;
`;
const Preview = styled.div`
  height: 80px;
  border: 1px solid #000;
  background: linear-gradient(#839614 0 39px, #000 39px);
`;
const Warn = styled.div`
  display: grid;
  gap: 5px;
  padding-top: 6px;
`;
const GamutSwatch = styled.button`
  width: 16px;
  height: 16px;
  border: 1px solid #fff;
  background: #829638;
`;
const Buttons = styled.div`
  display: grid;
  gap: 3px;
`;
const Pill = styled.button<{ $main?: boolean }>`
  height: 26px;
  padding-top: 1px;
  border: ${p => (p.$main ? 2 : 1)}px solid #222;
  border-radius: 13px;
`;
const ValueGrid = styled.div`
  display: grid;
  grid-template-columns: 18px 16px 59px 27px 59px;
  grid-auto-rows: 21px;
  row-gap: 4px;
  align-items: center;
`;
const Radio = styled.input`
  appearance: none;
  width: 13px;
  height: 13px;
  border: 1px solid #3a3a3a;
  border-radius: 50%;
  &:checked { border: 5px solid #444; background: #ddd; }
`;
const ValueInput = styled.input<{ $hot?: boolean; $wide?: boolean }>`
  width: 100%;
  height: 21px;
  padding: 0 4px;
  border: 1px solid ${p => (p.$hot ? '#0a63c9' : c.soft)};
  border-radius: 2px;
  outline: 0;
  background: ${c.field};
  font-size: 12px;
  ${p => p.$wide && css`grid-column: 2 / 4; justify-self: end; width: 81px;`}
`;
const RightLabel = styled.label`
  grid-column: 4;
  padding-right: 4px;
  text-align: right;
`;
const WebOnly = styled.label`
  display: flex;
  align-items: center;
  gap: 5px;
  padding: 14px 0 0 1px;
`;
const Tooltip = styled.div`
  position: absolute;
  left: 416px;
  top: 124px;
  height: 20px;
  padding: 2px 4px;
  border-radius: 2px;
  background: #f9f9f9;
  color: #575757;
  font-size: 12px;
  white-space: nowrap;
  box-shadow: 3px 3px 3px rgba(0, 0, 0, .45), 0 0 1px rgba(0, 0, 0, .4);
`;

const left = [['H', '67°'], ['S', '86%'], ['B', '58%'], ['R', '131'], ['G', '150'], ['B', '20']];
const right: Record<number, string[]> = { 3: ['C', '53%'], 4: ['M', '26%'], 5: ['Y', '100%'] };

const Picker = () => {
  const cyan = useRef<HTMLInputElement>(null);
  useEffect(() => {
    cyan.current?.focus();
    cyan.current?.select();
  }, []);
  return (
    <Dialog role="dialog" aria-label="Color Picker">
      <DialogTitle>Color Picker</DialogTitle>
      <DialogBody>
        <FieldColumn>
          <FieldLabel>Select Color:</FieldLabel>
          <ColorField />
          <WebOnly><Box type="checkbox" />Only Web Colors</WebOnly>
        </FieldColumn>
        <HueColumn>
          <Handle><svg width="8" height="8" viewBox="0 0 8 8"><path d="M0 0H4L8 4 4 8H0Z" fill={k} /></svg></Handle>
          <HueStrip />
          <Handle $right><svg width="8" height="8" viewBox="0 0 8 8"><path d="M8 0H4L0 4 4 8H8Z" fill={k} /></svg></Handle>
        </HueColumn>
        <Values>
          <Head>
            <Preview />
            <Warn>
              <svg width="16" height="15" viewBox="0 0 16 15"><path d="M8 0 16 15H0Z" fill={k} /><path d="M7.300 5H8.700V10.500H7.300ZM7.300 12H8.700V13.500H7.300Z" fill="#eee" /></svg>
              <GamutSwatch aria-label="In gamut color" />
            </Warn>
            <Buttons><Pill $main>OK</Pill><Pill>Cancel</Pill><Pill aria-label="Color Swatches" /></Buttons>
          </Head>
          <ValueGrid>
            {left.map(([n, v], i) => (
              <React.Fragment key={i}>
                <Radio type="radio" name="channel" id={`r${i}`} defaultChecked={i === 3} />
                <label htmlFor={`r${i}`}>{n}:</label>
                <ValueInput aria-label={n} defaultValue={v} />
                {right[i] ? (
                  <>
                    <RightLabel htmlFor={`v${i}`}>{right[i][0]}:</RightLabel>
                    <ValueInput id={`v${i}`} ref={i === 3 ? cyan : undefined} $hot={i === 3} defaultValue={right[i][1]} />
                  </>
                ) : <><span /><span /></>}
              </React.Fragment>
            ))}
            <label htmlFor="hex">#</label>
            <ValueInput id="hex" $wide defaultValue="839614" />
            <RightLabel htmlFor="kk">K:</RightLabel>
            <ValueInput id="kk" defaultValue="5%" />
          </ValueGrid>
        </Values>
      </DialogBody>
      <Tooltip role="tooltip">In Gamut Color (click to correct)</Tooltip>
    </Dialog>
  );
};

/* ---------- task bar ---------- */

const TaskBar = styled.nav`
  display: grid;
  grid-template-columns: 1fr auto 1fr;
  align-items: center;
  padding-left: 2px;
  background: #1f1f1f;
  color: #fff;
`;
const Pins = styled.div`
  grid-column: 2;
  display: flex;
`;
const Pin = styled.button<{ $on?: boolean; $dot?: boolean }>`
  position: relative;
  display: grid;
  place-items: center;
  width: 40px;
  height: 40px;
  margin: 0 2px;
  border-radius: 4px;
  ${p => p.$on && css`background: #2d2d2d;`}
  &::after {
    content: '';
    position: absolute;
    bottom: 1px;
    width: ${p => (p.$on ? 16 : 6)}px;
    height: 3px;
    border-radius: 2px;
    background: ${p => (p.$on ? '#d8a0dc' : p.$dot ? '#9a9a9a' : 'transparent')};
  }
`;
const Tile = styled.span<{ $bg: string; $fg: string }>`
  display: grid;
  place-items: center;
  width: 22px;
  height: 22px;
  border-radius: 4px;
  background: ${p => p.$bg};
  color: ${p => p.$fg};
  font-size: 12px;
  font-weight: 600;
`;
const Music = styled.span`
  display: grid;
  place-content: center;
  justify-items: center;
  width: 24px;
  height: 24px;
  background: linear-gradient(#4a00ff, #2a1a88);
  font-size: 8px;
  line-height: 8px;
  & > :first-child { font-size: 6px; font-weight: 700; }
`;
const Tray = styled.div`
  justify-self: end;
  display: flex;
  align-items: center;
  padding-right: 20px;
  font-size: 11px;
  line-height: 16px;
`;
const Lang = styled.span`
  width: 48px;
  text-align: center;
`;
const Clock = styled.time`
  width: 75px;
  margin-right: 7px;
  text-align: right;
`;

const T = ({ children }: { children: React.ReactNode }) => <svg width="24" height="24" viewBox="0 0 24 24">{children}</svg>;
const pins: { n: string; icon: React.ReactNode; on?: boolean; dot?: boolean }[] = [
  { n: 'Start', icon: <T><defs><linearGradient id="wn" x2="1" y2="1"><stop stopColor="#8be0ff" /><stop offset="1" stopColor="#0a8cff" /></linearGradient></defs><path d="M0 0H11.500V11.500H0ZM12.500 0H24V11.500H12.500ZM0 12.500H11.500V24H0ZM12.500 12.500H24V24H12.500Z" fill="url(#wn)" /></T> },
  { n: 'Settings', icon: <T><path d="M9.500 1H14.500L15.200 4 18 5.500 21 4.500 23.500 8.500 21.300 10.500V13.500L23.500 15.500 21 19.500 18 18.500 15.200 20 14.500 23H9.500L8.800 20 6 18.500 3 19.500 .5 15.500 2.700 13.500V10.500L.5 8.500 3 4.500 6 5.500 8.800 4Z" fill="#7d8791" /><circle cx="12" cy="12" r="6" fill="#e8eef4" /><circle cx="12" cy="12" r="4.200" fill="#1c6bc0" /></T> },
  { n: 'Monitor', icon: <T><path d="M0 3H24V21H0Z" fill="#e6eaf0" /><path d="M1 20V16L4 15 6 7 9 16 11 9 14 18 16 14 18 17 20 12 22 17V20Z" fill="#8cc8ea" /><path d="M1 16 4 15 6 7 9 16 11 9 14 18 16 14 18 17 20 12 23 17" fill="none" stroke="#3a8fc8" /></T> },
  { n: 'InDesign', icon: <Tile $bg="#49021f" $fg="#ff3366">Id</Tile> },
  { n: 'Illustrator', on: true, icon: <Tile $bg="#330000" $fg="#ff9a00">Ai</Tile> },
  { n: 'Photoshop', icon: <Tile $bg="#001e36" $fg="#31a8ff">Ps</Tile> },
  { n: 'Assetto', icon: <T><path d="M0 0H24V24H0Z" fill="#f4f4f4" /><path d="M11 2H14V5L12.500 6.500 11 5Z" fill="#a22" /><path d="M3 8.500H21" stroke="#333" strokeWidth="2" strokeDasharray="2 .5" /><path d="M3 16Q4 13 7 12.500L9 11H16L18 12.500Q21 13 21.500 16L21 20H3Z" fill="#222" /><path d="M4 17H20" stroke="#999" /><path d="M9 12.500H16" stroke="#aaa" /></T> },
  { n: 'Amazon Music', icon: <Music><span>amazon</span><span>music</span></Music> },
  { n: 'Signal', icon: <T><circle cx="12" cy="11.500" r="10" fill="none" stroke="#3a76f0" strokeWidth="1.300" strokeDasharray="3 1" /><path d="M12 3A8.500 8.500 0 1 1 8 19L4 20.500 5 16.500A8.500 8.500 0 0 1 12 3Z" fill="#fff" stroke="#3a76f0" strokeWidth=".6" /></T> },
  { n: 'Edge', icon: <T><defs><linearGradient id="e1" x2="1"><stop stopColor="#2aa6e8" /><stop offset="1" stopColor="#5fdc6a" /></linearGradient></defs><path d="M0 11C1 4 6 0 12 0 19 0 24 5 24 10.500 24 14 21 16.500 17.500 16.500 14.500 16.500 13.500 15 14.500 13.500 15.500 11 13 8 9 8 4 8 1 10 0 13Z" fill="url(#e1)" /><path d="M0 13C1 9 4 7.500 8 8 5 12 7 20 15 20 18 20 20 19.500 22 18.500 19.500 22.500 16 24 12 24 5 24 0 19 0 13Z" fill="#1272c4" /><path d="M8.500 10C6 14 9 20 15 20 18 20 20 19.500 22 18.500 19 23 15 24 12 23.500 6 22 5 14 8.500 10Z" fill="#0c4f96" /></T> },
  { n: 'Firefox', icon: <T><defs><linearGradient id="ff" x1="1" x2="0" y2="1"><stop stopColor="#ffe226" /><stop offset=".5" stopColor="#ff7a1c" /><stop offset="1" stopColor="#f0135a" /></linearGradient></defs><path d="M3 4 5 6 8 4 9 6Q12 5 12 5 13 1 15 0 17 4 20 5 24 9 23.500 14 22 24 12 24 1 23 .5 13 .5 8 3 4Z" fill="url(#ff)" /><circle cx="12" cy="13.500" r="5.500" fill="#8a3df0" /><path d="M5 9Q10 7 14 10 11 10 10.500 12 7 13 5 9Z" fill="#ff9a1f" /></T> },
  { n: 'Outlook', icon: <T><path d="M7 1H22V12H7Z" fill="#28a8ea" /><path d="M7 1H14V7H7Z" fill="#0f6cbd" /><path d="M14 7H22V13H14Z" fill="#50d0ff" /><path d="M6 11 15 16 24 11V23H6Z" fill="#1490df" /><path d="M0 6H12V18H0Z" fill="#0f64b8" /><ellipse cx="6" cy="12" rx="2.700" ry="3.200" fill="none" stroke="#fff" strokeWidth="1.700" /></T> },
  { n: 'Mail', icon: <T><path d="M0 9 12 0 24 9V12H0Z" fill="#0c59a4" /><path d="M3 8H21V15L12 20 3 15Z" fill="#eaf4fc" /><path d="M0 9 24 23H0Z" fill="#1c8ce0" /><path d="M24 9 0 23H24Z" fill="#43b4f5" opacity=".85" /><path d="M2 9H22L12 16Z" fill="#f2f8fd" /></T> },
  { n: 'Sticky Notes', icon: <T><path d="M1 1H23V12L12 23H1Z" fill="#ffd900" /><path d="M23 12V23H12Z" fill="#d8a800" /><path d="M12 23V12H23Z" fill="#333" /></T> },
  { n: 'Notepad', dot: true, icon: <T><path d="M3 2H21V22H3Z" fill="#56c8e4" /><path d="M3 21H21V24H3Z" fill="#c8612a" /><path d="M3 20H21V21.500H3Z" fill="#eee" /><path d="M5 0V4M8 0V4M11 0V4M14 0V4M17 0V4M19.500 0V4" stroke="#b9effa" strokeWidth="1.200" /><path d="M7 8H17M7 12H17M7 16H15" stroke="#0a5d86" strokeWidth="1.600" /></T> },
  { n: 'Explorer', dot: true, icon: <T><path d="M0 2H9L11 5H22V10H0Z" fill="#e2a21a" /><path d="M0 5H24V23H0Z" fill="#ffd35a" /><path d="M5 16Q5 14 7 14H17Q19 14 19 16V23H5Z" fill="#1d7fd0" /></T> },
];

const Tasks = () => (
  <TaskBar>
    <Pins>{pins.map(p => <Pin key={p.n} aria-label={p.n} $on={p.on} $dot={p.dot}>{p.icon}</Pin>)}</Pins>
    <Tray>
      <svg width="12" height="8" viewBox="0 0 12 8" fill="none" stroke="#fff" strokeWidth="1.300"><path d="M.7 7 6 1.500 11.300 7" /></svg>
      <Gap $w={11} />
      <svg width="16" height="16" viewBox="0 0 16 16"><path d="M7 0Q10 2 14 2V7Q14 13 7 15.500 0 13 0 7V2Q4 2 7 0Z" fill="#2f9be8" /><path d="M7 0V15.500Q0 13 0 7V2Q4 2 7 0Z" fill="#5fc0f5" /><circle cx="10.500" cy="11" r="4.800" fill="#0f8a1f" /><path d="M8.300 11 10 12.700 13 9.500" fill="none" stroke="#fff" strokeWidth="1.200" /></svg>
      <Gap $w={2} />
      <Lang>ENG<br />IN</Lang>
      <Gap $w={5} />
      <svg width="16" height="13" viewBox="0 0 16 13" fill="none" stroke="#fff" strokeWidth="1.200"><path d="M.5 5Q8-3 15.500 5M2.800 7.500Q8 2 13.200 7.500M5 9.800Q8 6.500 11 9.800" /><circle cx="8" cy="11.200" r="1.400" fill="#fff" stroke="none" /></svg>
      <Gap $w={8} />
      <svg width="16" height="14" viewBox="0 0 16 14" fill="none" stroke="#fff" strokeWidth="1.100"><path d="M.6 5H3L6.500 1.500V12.500L3 9H.6ZM8.500 5Q10 7 8.500 9M10.500 3Q13.500 7 10.500 11M12.500 1Q17 7 12.500 13" /></svg>
      <Gap $w={8} />
      <svg width="17" height="14" viewBox="0 0 17 14"><path d="M2 5V11Q2 12.500 3.500 12.500H12Q13.500 12.500 13.500 11V5Q13.500 3.500 12 3.500H6" fill="none" stroke="#fff" strokeWidth="1.200" /><path d="M4 5.500H12V11H4ZM14 6.500H16V9.500H14ZM3 0 0 4.500H2.500L1.500 8 6 3.500H3.500L5 0Z" fill="#fff" /></svg>
      <Clock>09:33<br />12-10-2022</Clock>
      <svg width="16" height="17" viewBox="0 0 16 17" fill="#fff"><path d="M1.500 7Q1.500 1.500 7 1.500 12.500 1.500 12.500 7V10L14.500 13H0L1.500 10ZM5 14H9Q9 16 7 16 5 16 5 14Z" /><path d="M5 6H9L5 10H9" fill="none" stroke="#1f1f1f" strokeWidth="1.300" /><path d="M10 0H16V6H12.500L10 3Z" fill="#1f1f1f" /><path d="M11 1.500H14.500L11 5H14.500" fill="none" stroke="#fff" strokeWidth="1.200" /></svg>
    </Tray>
  </TaskBar>
);

export default function App() {
  return (
    <>
      <Global />
      <Shell>
        <Header />
        <Controls />
        <Workspace><Tools /><Document /><Properties /></Workspace>
        <Tasks />
      </Shell>
      <Picker />
    </>
  );
}
